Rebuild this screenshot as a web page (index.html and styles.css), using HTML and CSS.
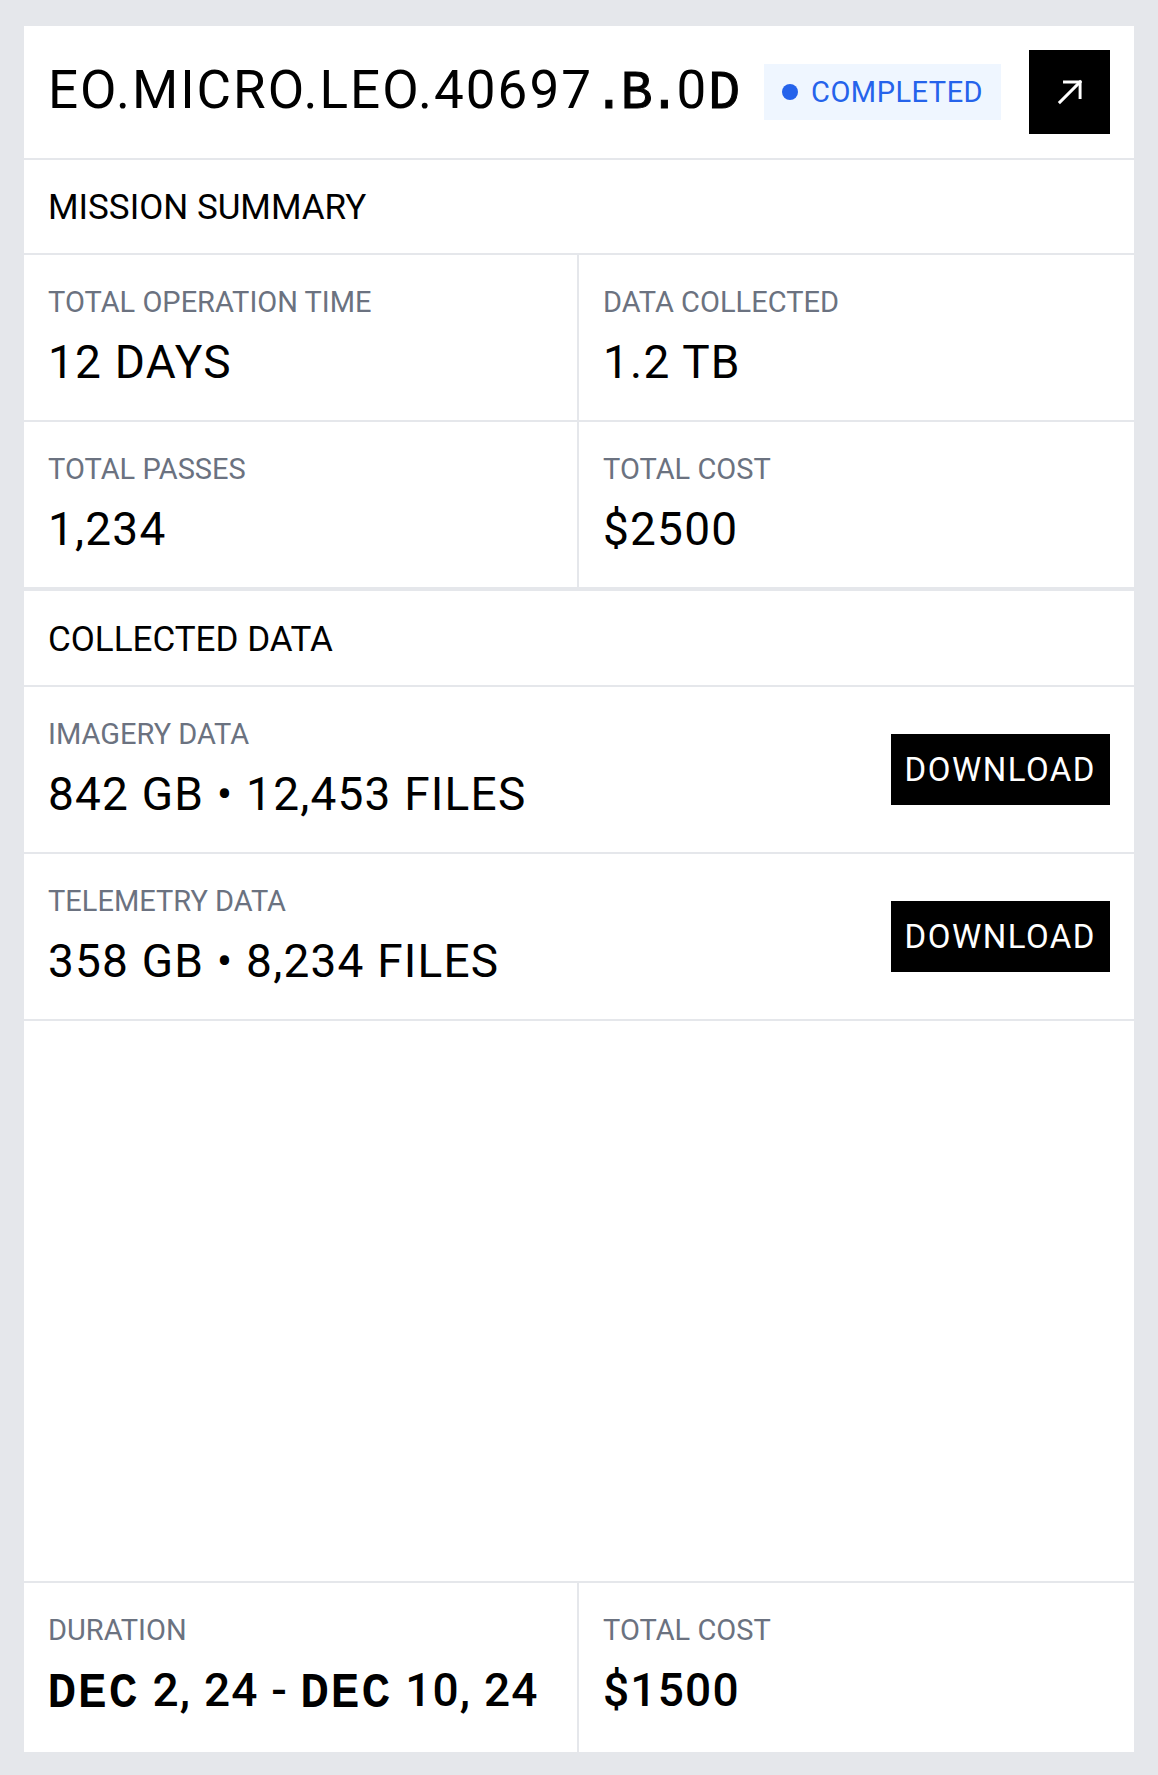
FILE: index.html
```html
<!DOCTYPE html>
<html lang="en">
<head>
  <meta charset="UTF-8">
  <title>EO.MICRO.LEO.40697.B.0D</title>
  <meta name="viewport" content="width=device-width, initial-scale=1.0">
  <link rel="stylesheet" href="styles.css">
</head>
<body>

  <div class="card">
    <div class="head">
      <h1 class="mission-id">EO.MICRO.LEO.40697<span class="slab">.B.</span>0<span class="slab">D</span></h1>
      <span class="status"><span class="status-dot"></span>COMPLETED</span>
      <button class="open-btn" aria-label="Open">
        <svg width="44" height="44" viewBox="0 0 24 24" fill="none" stroke="#fff" stroke-width="1.6" stroke-linecap="square">
          <path d="M6.5 17.5 17.5 6.5"/>
          <path d="M9 6.5h8.5V15"/>
        </svg>
      </button>
    </div>

    <div class="section-title">MISSION SUMMARY</div>

    <div class="stats">
      <div class="stat">
        <div class="label">TOTAL OPERATION TIME</div>
        <div class="value">12 DAYS</div>
      </div>
      <div class="stat">
        <div class="label">DATA COLLECTED</div>
        <div class="value">1.2 TB</div>
      </div>
      <div class="stat">
        <div class="label">TOTAL PASSES</div>
        <div class="value">1,234</div>
      </div>
      <div class="stat">
        <div class="label">TOTAL COST</div>
        <div class="value">$2500</div>
      </div>
    </div>

    <div class="section-title collected">COLLECTED DATA</div>

    <div class="file-row">
      <div>
        <div class="label">IMAGERY DATA</div>
        <div class="value">842 GB • 12,453 FILES</div>
      </div>
      <button class="download">DOWNLOAD</button>
    </div>

    <div class="file-row">
      <div>
        <div class="label">TELEMETRY DATA</div>
        <div class="value">358 GB • 8,234 FILES</div>
      </div>
      <button class="download">DOWNLOAD</button>
    </div>

    <div class="spacer"></div>

    <div class="stats footer">
      <div class="stat">
        <div class="label">DURATION</div>
        <div class="value"><span class="slab">DEC</span> 2, 24 - <span class="slab">DEC</span> 10, 24</div>
      </div>
      <div class="stat">
        <div class="label">TOTAL COST</div>
        <div class="value">$1500</div>
      </div>
    </div>
  </div>

</body>
</html>
```

FILE: styles.css
```css
* { box-sizing: border-box; }

body {
  margin: 0;
  padding: 26px 24px 23px;
  font-family: Roboto, 'Liberation Sans', sans-serif;
  background-color: #e5e7eb;
  color: #000;
}

.card {
  background: white;
  min-height: calc(100vh - 49px);
  display: flex;
  flex-direction: column;
}

.head {
  display: flex;
  align-items: center;
  gap: 28px;
  padding: 24px;
  border-bottom: 2px solid #e5e7eb;
}

.mission-id {
  margin: 0;
  font-size: 53px;
  font-weight: 400;
  letter-spacing: 2px;
  line-height: 1;
  white-space: nowrap;
}

/* the id tail and month names render in a slab face */
.slab {
  font-family: 'Liberation Mono', monospace;
  font-weight: 400;
  letter-spacing: -4px;
  -webkit-text-stroke: 1px currentColor;
}

.status {
  display: flex;
  align-items: center;
  gap: 13px;
  height: 56px;
  padding: 0 18px;
  background: #eff6ff;
  color: #2563eb;
  font-size: 29px;
  letter-spacing: 0.5px;
}

.status-dot {
  width: 16px;
  height: 16px;
  border-radius: 50%;
  background: #2563eb;
}

.open-btn {
  margin-left: auto;
  width: 84px;
  height: 84px;
  border: none;
  background: #000;
  display: flex;
  align-items: center;
  justify-content: center;
  cursor: pointer;
}

.section-title {
  padding: 25px 24px 23px;
  font-size: 35px;
  line-height: 45px;
  border-bottom: 2px solid #e5e7eb;
}

.section-title.collected {
  border-top: 2px solid #e5e7eb;
  padding: 26px 24px 23px;
}

.stats {
  display: grid;
  grid-template-columns: 1fr 1fr;
}

.stat {
  padding: 29px 24px 30px;
  border-bottom: 2px solid #e5e7eb;
}

.stat:nth-child(odd) {
  border-right: 2px solid #e5e7eb;
}

.label {
  font-size: 29px;
  line-height: 36px;
  color: #6b7280;
}

.value {
  margin-top: 14px;
  font-size: 46px;
  line-height: 56px;
  letter-spacing: 1.2px;
  white-space: nowrap;
}

.file-row {
  display: flex;
  align-items: center;
  justify-content: space-between;
  padding: 29px 24px 30px;
  border-bottom: 2px solid #e5e7eb;
}

.download {
  background: #000;
  color: #fff;
  border: none;
  font-family: inherit;
  font-size: 33px;
  letter-spacing: 1.5px;
  line-height: 39px;
  padding: 16px 14px;
  cursor: pointer;
}

.spacer {
  flex: 1;
}

.footer {
  border-top: 2px solid #e5e7eb;
}

.footer .stat {
  border-bottom: none;
}

.footer .value {
  font-weight: 500;
}

.footer .value .slab {
  letter-spacing: 3px;
  -webkit-text-stroke: 2px currentColor;
}
```
